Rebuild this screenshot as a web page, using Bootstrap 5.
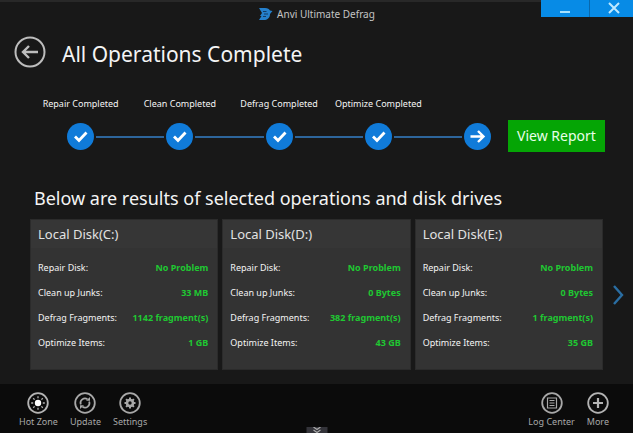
<!DOCTYPE html>
<html lang="en">
<head>
<meta charset="utf-8">
<meta name="viewport" content="width=device-width, initial-scale=1">
<title>Anvi Ultimate Defrag</title>
<link href="https://cdn.jsdelivr.net/npm/bootstrap@5.3.0/dist/css/bootstrap.min.css" rel="stylesheet">
<style>
body { background: #181818; color: #f4f4f4; font-family: "Noto Sans", "Open Sans", sans-serif; font-size: 9px; line-height: 16px; }
button { color: inherit; background: none; border: 0; padding: 0; }
svg { display: block; }
.titlebar { display: grid; grid-template-columns: 1fr auto 1fr; height: 26px; box-shadow: inset 0 2px #282828; }
.app-name { font-size: 10px; color: #c4c4c4; padding-top: 2px; }
.win-btn { background: #078be6; width: 48px; height: 17px; display: flex; justify-content: center; }
.win-btn + .win-btn { width: 44px; border-left: 1px solid #0868ad; padding-left: 5px; }
.page-head { padding: 8px 14px 0; gap: 16px; }
.page-head h1 { font-size: 21px; line-height: 32px; font-weight: 400; padding-top: 4px; }
.progress-row { padding: 26px 28px 0 31px; }
.step { flex: 1 1 0; text-align: center; white-space: nowrap; }
.step:last-child { flex: 0 0 80px; }
.track { display: grid; grid-template-columns: 1fr 27px 1fr; align-items: center; margin-top: 11px; }
.step:last-child .track { grid-template-columns: 1fr 27px 17px; }
.step .rail { height: 2px; background: #2d659b; }
.rail-in { margin-right: 2px; }
.rail-out { margin-left: 2px; }
.step-label { min-height: 16px; }
.btn-report { width: 97px; height: 32px; background: #05a505; color: #e9ffe9; font-size: 14px; border-radius: 0; padding: 0; line-height: 32px; border: 0; margin-bottom: -2px; }
.btn-report:hover { background: #079107; color: #fff; }
.results h2 { font-size: 18px; line-height: 26px; font-weight: 400; margin: 35px 0 8px 34px; }
.disk-list { display: grid; grid-template-columns: repeat(3, 1fr); gap: 4px; padding-left: 30px; flex: 1; }
.disk { background: #333; border: 1px solid #2b2b2b; border-radius: 0; color: inherit; }
.disk h3 { font-size: 13px; line-height: 28px; font-weight: 400; margin: 0; padding: 0 7px; background: #363636; color: #e2e2e2; }
.disk dl { margin: 0; padding: 7px 9px 14px 7px; }
.disk dl div { display: flex; justify-content: space-between; line-height: 25px; white-space: nowrap; }
.disk dt { font-weight: 400; }
.disk dd { margin: 0; font-weight: 700; color: #1fc832; }
.next-btn { width: 30px; padding-left: 9px; }
.toolbar { background: #0b0b0b; color: #a8a8a8; padding: 8px 24px 1px 19px; min-height: 49px; position: relative; }
.tool-set { gap: 12px; }
.tool { display: flex; flex-direction: column; align-items: center; line-height: 16px; white-space: nowrap; }
.drawer-tab { position: absolute; bottom: 0; left: 50%; transform: translateX(-50%); background: #34343a; width: 21px; height: 6px; display: flex; justify-content: center; }
</style>
<script src="https://cdn.jsdelivr.net/npm/bootstrap@5.3.0/dist/js/bootstrap.bundle.min.js"></script>
</head>
<body class="d-flex flex-column min-vh-100">
<header class="titlebar">
  <span></span>
  <div class="app-name d-flex align-items-center gap-1">
    <svg width="15" height="14" viewBox="0 0 15 14"><path fill="#2580cc" d="M1 1h6c3 0 4 1 5 2.500L14.500 4 12 7c0 4-3 6-6 6H1l2.500-4H2l2-3z"/><path d="M5 4.500h3.500M6 7h4M5 9.500h3" fill="none" stroke="#133c66" stroke-width="1.200"/></svg>
    <span>Anvi Ultimate Defrag</span>
  </div>
  <div class="d-flex justify-content-end align-items-start">
    <button class="win-btn" aria-label="Minimize"><svg width="12" height="17" viewBox="0 0 12 17"><path d="M1 12h10" stroke="#a5e2ff" stroke-width="2"/></svg></button>
    <button class="win-btn" aria-label="Close"><svg width="14" height="17" viewBox="0 0 14 17"><path d="M2 3l10 10M12 3L2 13" stroke="#bde8ff" stroke-width="2"/></svg></button>
  </div>
</header>
<main class="flex-grow-1">
  <div class="page-head d-flex align-items-center">
    <button aria-label="Back"><svg width="32" height="32" viewBox="0 0 32 32" fill="none" stroke="#bdbdbd" stroke-width="2"><circle cx="16" cy="16" r="14.500"/><path d="M24 16H9M15 10l-6 6 6 6" stroke-width="2.400"/></svg></button>
    <h1 class="m-0">All Operations Complete</h1>
  </div>
  <section class="progress-row d-flex align-items-end">
    <ol class="list-unstyled d-flex flex-grow-1 m-0">
      <li class="step"><div class="step-label">Repair Completed</div><div class="track"><span></span><svg width="27" height="27" viewBox="0 0 27 27"><circle cx="13.500" cy="13.500" r="13.500" fill="#107bd9"/><path d="M8 13.500l4 4 7.500-8" fill="none" stroke="#fff" stroke-width="2.800"/></svg><span class="rail rail-out"></span></div></li>
      <li class="step"><div class="step-label">Clean Completed</div><div class="track"><span class="rail rail-in"></span><svg width="27" height="27" viewBox="0 0 27 27"><circle cx="13.500" cy="13.500" r="13.500" fill="#107bd9"/><path d="M8 13.500l4 4 7.500-8" fill="none" stroke="#fff" stroke-width="2.800"/></svg><span class="rail rail-out"></span></div></li>
      <li class="step"><div class="step-label">Defrag Completed</div><div class="track"><span class="rail rail-in"></span><svg width="27" height="27" viewBox="0 0 27 27"><circle cx="13.500" cy="13.500" r="13.500" fill="#107bd9"/><path d="M8 13.500l4 4 7.500-8" fill="none" stroke="#fff" stroke-width="2.800"/></svg><span class="rail rail-out"></span></div></li>
      <li class="step"><div class="step-label">Optimize Completed</div><div class="track"><span class="rail rail-in"></span><svg width="27" height="27" viewBox="0 0 27 27"><circle cx="13.500" cy="13.500" r="13.500" fill="#107bd9"/><path d="M8 13.500l4 4 7.500-8" fill="none" stroke="#fff" stroke-width="2.800"/></svg><span class="rail rail-out"></span></div></li>
      <li class="step"><div class="step-label"></div><div class="track"><span class="rail rail-in"></span><svg width="27" height="27" viewBox="0 0 27 27"><circle cx="13.500" cy="13.500" r="13.500" fill="#107bd9"/><path d="M6.500 13.500H19M14 8l5.500 5.500L14 19" fill="none" stroke="#fff" stroke-width="2.400"/></svg><span></span></div></li>
    </ol>
    <button class="btn btn-report">View Report</button>
  </section>
  <section class="results">
    <h2>Below are results of selected operations and disk drives</h2>
    <div class="d-flex align-items-center">
      <div class="disk-list">
        <article class="card disk"><h3>Local Disk(C:)</h3><dl>
          <div><dt>Repair Disk:</dt><dd>No Problem</dd></div>
          <div><dt>Clean up Junks:</dt><dd>33 MB</dd></div>
          <div><dt>Defrag Fragments:</dt><dd>1142 fragment(s)</dd></div>
          <div><dt>Optimize Items:</dt><dd>1 GB</dd></div></dl></article>
        <article class="card disk"><h3>Local Disk(D:)</h3><dl>
          <div><dt>Repair Disk:</dt><dd>No Problem</dd></div>
          <div><dt>Clean up Junks:</dt><dd>0 Bytes</dd></div>
          <div><dt>Defrag Fragments:</dt><dd>382 fragment(s)</dd></div>
          <div><dt>Optimize Items:</dt><dd>43 GB</dd></div></dl></article>
        <article class="card disk"><h3>Local Disk(E:)</h3><dl>
          <div><dt>Repair Disk:</dt><dd>No Problem</dd></div>
          <div><dt>Clean up Junks:</dt><dd>0 Bytes</dd></div>
          <div><dt>Defrag Fragments:</dt><dd>1 fragment(s)</dd></div>
          <div><dt>Optimize Items:</dt><dd>35 GB</dd></div></dl></article>
      </div>
      <button class="next-btn" aria-label="Next disks"><svg width="12" height="22" viewBox="0 0 12 22"><path d="M2 2l8 9-8 9" fill="none" stroke="#2a6ea3" stroke-width="2.400"/></svg></button>
    </div>
  </section>
</main>
<footer class="toolbar d-flex justify-content-between align-items-start">
  <div class="tool-set d-flex">
    <button class="tool"><svg width="22" height="22" viewBox="0 0 22 22" fill="none" stroke="#b4b4b4" stroke-width="1.800"><circle cx="11" cy="11" r="9.800"/><circle cx="11" cy="11" r="3.200" fill="#fff" stroke="none"/><path d="M11 4.200v2M11 15.800v2M4.200 11h2M15.800 11h2M6.200 6.200l1.400 1.400M14.400 14.400l1.400 1.400M6.200 15.800l1.400-1.400M14.400 7.600l1.400-1.400" stroke-width="1.300"/></svg><span>Hot Zone</span></button>
    <button class="tool"><svg width="22" height="22" viewBox="0 0 22 22" fill="none" stroke="#a8a8a8" stroke-width="1.800"><circle cx="11" cy="11" r="9.800"/><path d="M6.800 12.500a4.500 4.500 0 0 1 6.700-5.300M15.200 9.500a4.500 4.500 0 0 1-6.700 5.300" stroke-width="1.700"/><path d="M12 8.800h4V5zM10 13.200H6V17z" fill="#a8a8a8" stroke="none"/></svg><span>Update</span></button>
    <button class="tool"><svg width="22" height="22" viewBox="0 0 22 22" fill="none" stroke="#a8a8a8" stroke-width="1.800"><circle cx="11" cy="11" r="9.800"/><circle cx="11" cy="11" r="3" stroke-width="2.600"/><path d="M11 5.500v2M11 14.500v2M5.500 11h2M14.500 11h2M7.100 7.100l1.400 1.400M13.500 13.500l1.400 1.400M7.100 14.900l1.400-1.400M13.500 8.500l1.400-1.400" stroke-width="2"/></svg><span>Settings</span></button>
  </div>
  <div class="tool-set d-flex">
    <button class="tool"><svg width="22" height="22" viewBox="0 0 22 22" fill="none" stroke="#a8a8a8" stroke-width="1.800"><circle cx="11" cy="11" r="9.800"/><path d="M6.500 6h9v10h-9zM8.500 8.500h5M8.500 11h5M8.500 13.500h5" stroke-width="1.200"/></svg><span>Log Center</span></button>
    <button class="tool"><svg width="22" height="22" viewBox="0 0 22 22" fill="none" stroke="#b4b4b4" stroke-width="1.800"><circle cx="11" cy="11" r="9.800"/><path d="M11 6v10M6 11h10" stroke-width="2.200"/></svg><span>More</span></button>
  </div>
  <button class="drawer-tab" aria-label="Open drawer"><svg width="9" height="6" viewBox="0 0 9 6"><path d="M1 0l3.500 2.500L8 0M1 3l3.500 2.500L8 3" fill="none" stroke="#aaa" stroke-width="1.200"/></svg></button>
</footer>
</body>
</html>
